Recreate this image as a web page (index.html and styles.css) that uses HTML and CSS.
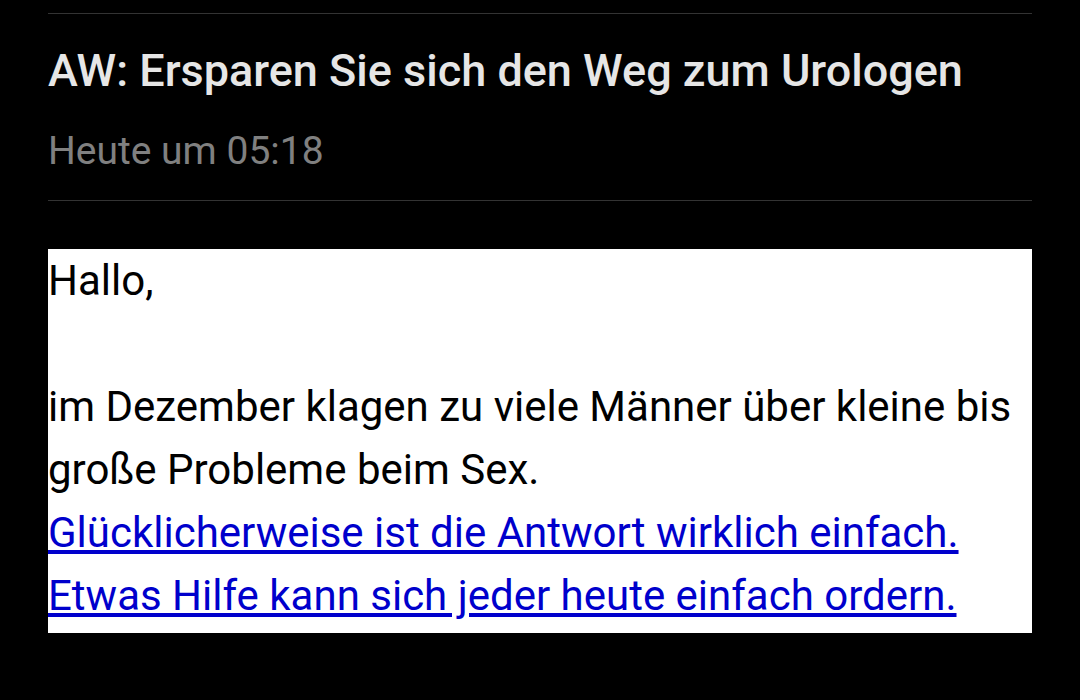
FILE: index.html
```html
<!DOCTYPE html>
<html lang="de">
  <head>
    <meta charset="UTF-8" />
    <meta name="viewport" content="width=device-width, initial-scale=1.0" />
    <title>AW: Ersparen Sie sich den Weg zum Urologen</title>
    <link rel="stylesheet" href="styles.css">
  </head>
  <body>
    <div class="mail">
      <div class="mail-header">
        <h1 class="subject">AW: Ersparen Sie sich den Weg zum Urologen</h1>
        <div class="date">Heute um 05:18</div>
      </div>

      <div class="mail-body">
        Hallo,<br>
        <br>
        im Dezember klagen zu viele Männer über kleine bis große Probleme beim Sex.<br>
        <a href="#">Glücklicherweise ist die Antwort wirklich einfach.</a><br>
        <a href="#">Etwas Hilfe kann sich jeder heute einfach ordern.</a>
      </div>
    </div>
  </body>
</html>
```

FILE: styles.css
```css
body {
  margin: 0;
  background: #000;
  font-family: Roboto, "Liberation Sans", sans-serif;
}
.mail {
  padding: 13px 48px 0;
}
.mail-header {
  border-top: 1px solid #333;
  border-bottom: 1px solid #333;
  padding: 32px 0 26px;
}
.subject {
  margin: 0;
  font-size: 45px;
  font-weight: 500;
  line-height: 50px;
  color: #e6e6e6;
}
.date {
  margin-top: 33px;
  font-size: 39px;
  line-height: 45px;
  color: #808080;
}
.mail-body {
  margin-top: 48px;
  background: #fff;
  color: #000;
  font-size: 42px;
  line-height: 63px;
  padding-bottom: 6px;
}
.mail-body a {
  color: #0000cc;
}
```
